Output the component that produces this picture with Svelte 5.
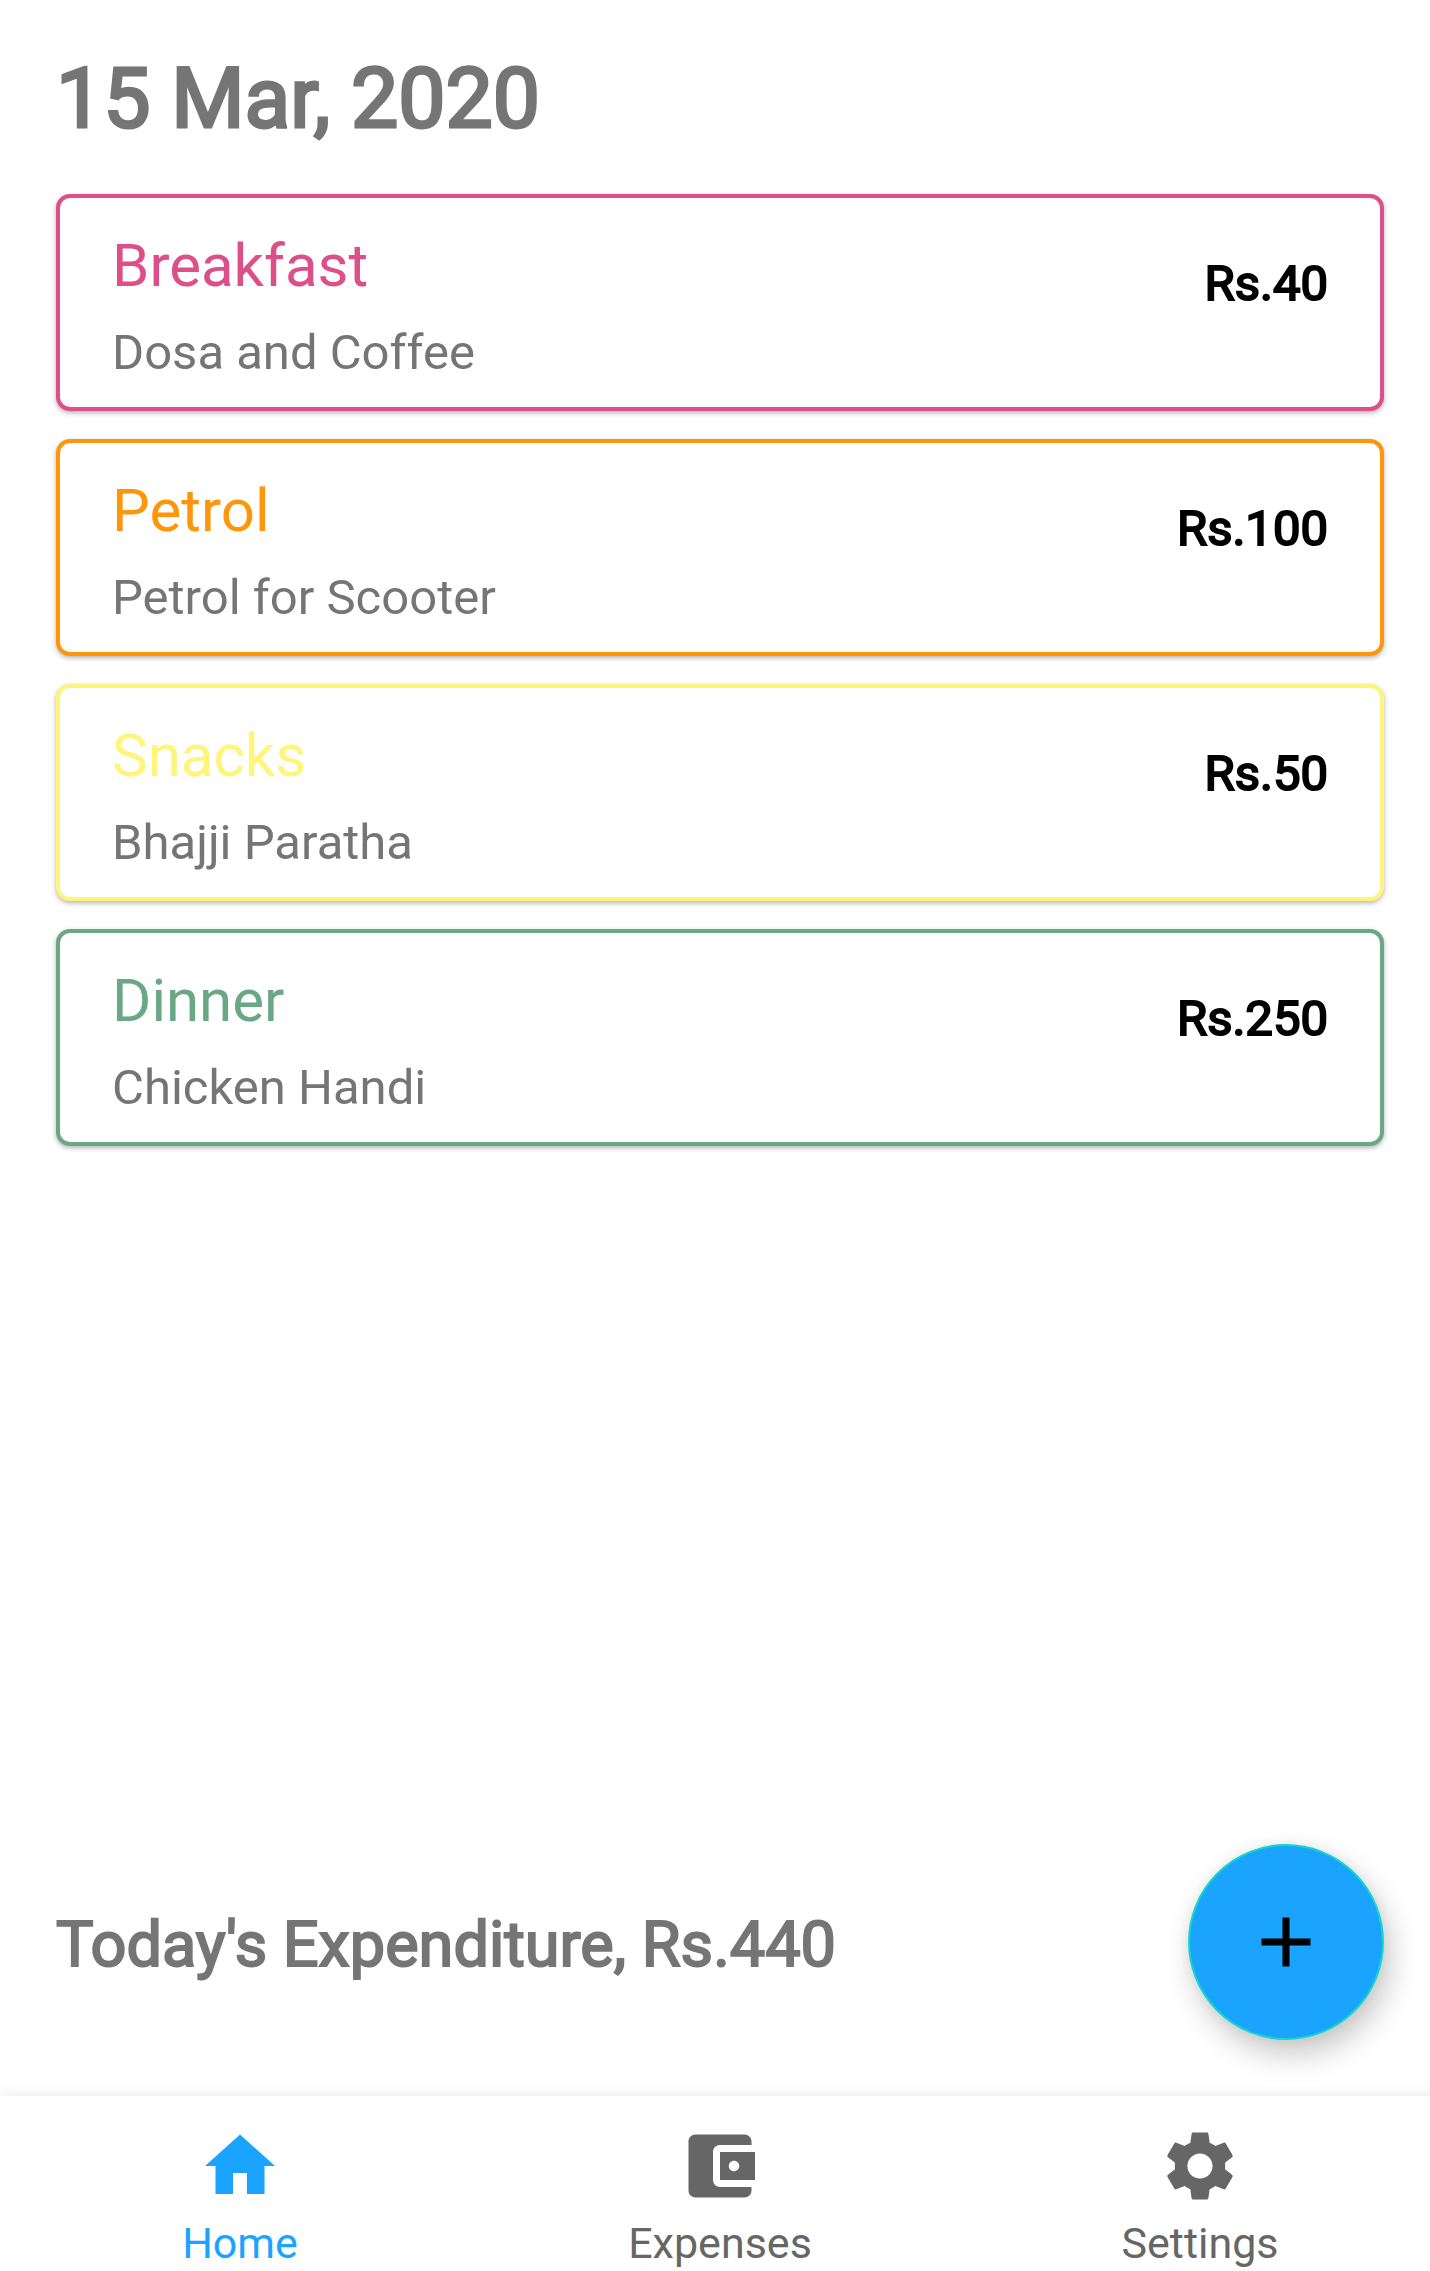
<script>
  const currency = 'Rs.';

  const expenses = [
    { title: 'Breakfast', note: 'Dosa and Coffee', amount: 40, tone: 'pink' },
    { title: 'Petrol', note: 'Petrol for Scooter', amount: 100, tone: 'orange' },
    { title: 'Snacks', note: 'Bhajji Paratha', amount: 50, tone: 'yellow' },
    { title: 'Dinner', note: 'Chicken Handi', amount: 250, tone: 'green' }
  ];

  const total = expenses.reduce((sum, item) => sum + item.amount, 0);

  const tabs = [
    { label: 'Home', icon: 'M10 20v-6h4v6h5v-8h3L12 3 2 12h3v8z' },
    {
      label: 'Expenses',
      icon: 'M21 18v1c0 1.1-.9 2-2 2H5c-1.11 0-2-.9-2-2V5c0-1.1.89-2 2-2h14c1.1 0 2 .9 2 2v1h-9c-1.11 0-2 .9-2 2v8c0 1.1.89 2 2 2h9zm-9-2h10V8H12v8zm4-2.5c-.83 0-1.5-.67-1.5-1.5s.67-1.5 1.5-1.5 1.5.67 1.5 1.5-.67 1.5-1.5 1.5z'
    },
    {
      label: 'Settings',
      icon: 'M19.14 12.94c.04-.3.06-.61.06-.94 0-.32-.02-.64-.07-.94l2.03-1.58c.18-.14.23-.41.12-.61l-1.92-3.32c-.12-.22-.37-.29-.59-.22l-2.39.96c-.5-.38-1.03-.7-1.62-.94l-.36-2.54c-.04-.24-.24-.41-.48-.41h-3.84c-.24 0-.43.17-.47.41l-.36 2.54c-.59.24-1.13.57-1.62.94l-2.39-.96c-.22-.08-.47 0-.59.22L2.74 8.87c-.12.21-.08.47.12.61l2.03 1.58c-.05.3-.09.63-.09.94s.02.64.07.94l-2.03 1.58c-.18.14-.23.41-.12.61l1.92 3.32c.12.22.37.29.59.22l2.39-.96c.5.38 1.03.7 1.62.94l.36 2.54c.05.24.24.41.48.41h3.84c.24 0 .44-.17.47-.41l.36-2.54c.59-.24 1.13-.56 1.62-.94l2.39.96c.22.08.47 0 .59-.22l1.92-3.32c.12-.22.07-.47-.12-.61l-2.01-1.58zM12 15.6c-1.98 0-3.6-1.62-3.6-3.6s1.62-3.6 3.6-3.6 3.6 1.62 3.6 3.6-1.62 3.6-3.6 3.6z'
    }
  ];

  let active = $state('Home');
</script>

<div class="screen">
  <main>
    <h1>15 Mar, 2020</h1>

    <ul class="list">
      {#each expenses as item}
        <li class="card {item.tone}">
          <div class="details">
            <h2>{item.title}</h2>
            <p>{item.note}</p>
          </div>
          <span class="amount">{currency}{item.amount}</span>
        </li>
      {/each}
    </ul>

    <div class="summary">
      <p class="total">Today's Expenditure, {currency}{total}</p>
      <button class="add" type="button" aria-label="Add expense">
        <svg viewBox="0 0 24 24" aria-hidden="true"><path d="M19 13h-6v6h-2v-6H5v-2h6V5h2v6h6z" /></svg>
      </button>
    </div>
  </main>

  <nav>
    {#each tabs as tab}
      <button
        type="button"
        class="tab"
        class:active={active === tab.label}
        aria-current={active === tab.label ? 'page' : undefined}
        onclick={() => (active = tab.label)}
      >
        <svg viewBox="0 0 24 24" aria-hidden="true"><path d={tab.icon} /></svg>
        <span>{tab.label}</span>
      </button>
    {/each}
  </nav>
</div>

<style>
  :global(body) {
    background: #fff;
  }

  .screen {
    min-height: 100vh;
    display: flex;
    flex-direction: column;
    overflow: hidden;
    font-family: Roboto, 'Liberation Sans', sans-serif;
    color: #757575;
  }

  main {
    flex: 1;
    display: flex;
    flex-direction: column;
    padding: 49px 46px 56px 56px;
  }

  h1,
  h2,
  p,
  ul {
    margin: 0;
    padding: 0;
    font-weight: 400;
  }

  h1 {
    font-size: 84px;
    line-height: 100px;
    -webkit-text-stroke: 3px currentColor;
  }

  .list {
    display: flex;
    flex-direction: column;
    gap: 28px;
    margin-top: 45px;
    list-style: none;
  }

  .card {
    display: flex;
    justify-content: space-between;
    align-items: flex-start;
    padding: 33px 52px 25px;
    border: 4px solid var(--tone);
    border-radius: 14px;
    background: #fff;
    box-shadow: 0 2px 5px rgba(0, 0, 0, 0.3);
  }

  .pink { --tone: #dc4f89; }
  .orange { --tone: #ff960a; }
  .yellow { --tone: #fff57b; }
  .green { --tone: #6aa784; }

  .details {
    display: flex;
    flex-direction: column;
    gap: 23px;
  }

  h2 {
    font-size: 60px;
    line-height: 70px;
    color: var(--tone);
  }

  .details p,
  .amount {
    font-size: 49px;
    line-height: 58px;
  }

  .amount {
    margin-top: 24px;
    color: #000;
    -webkit-text-stroke: 2px currentColor;
  }

  .summary {
    display: flex;
    justify-content: space-between;
    align-items: center;
    margin-top: auto;
  }

  .total {
    padding-top: 6px;
    font-size: 63px;
    line-height: 74px;
    -webkit-text-stroke: 2px currentColor;
  }

  button {
    margin: 0;
    padding: 0;
    border: 0;
    background: none;
    font: inherit;
    cursor: pointer;
  }

  svg {
    width: 84px;
    height: 84px;
    fill: currentColor;
  }

  .add {
    flex: none;
    display: grid;
    place-items: center;
    width: 196px;
    height: 196px;
    border: 2px solid #12d8cc;
    border-radius: 50%;
    background: #1aa3ff;
    color: #000;
    box-shadow:
      6px 14px 30px rgba(0, 0, 0, 0.22),
      0 0 12px rgba(0, 0, 0, 0.06);
  }

  nav {
    display: grid;
    grid-template-columns: repeat(3, 1fr);
    width: calc(100% + 10px);
    padding: 28px 0 3px;
    background: #fff;
    box-shadow: 0 0 14px rgba(0, 0, 0, 0.1);
  }

  .tab {
    display: flex;
    flex-direction: column;
    align-items: center;
    gap: 10px;
    font-size: 43px;
    line-height: 50px;
    color: #666;
  }

  .tab.active {
    color: #1aa3ff;
  }
</style>
